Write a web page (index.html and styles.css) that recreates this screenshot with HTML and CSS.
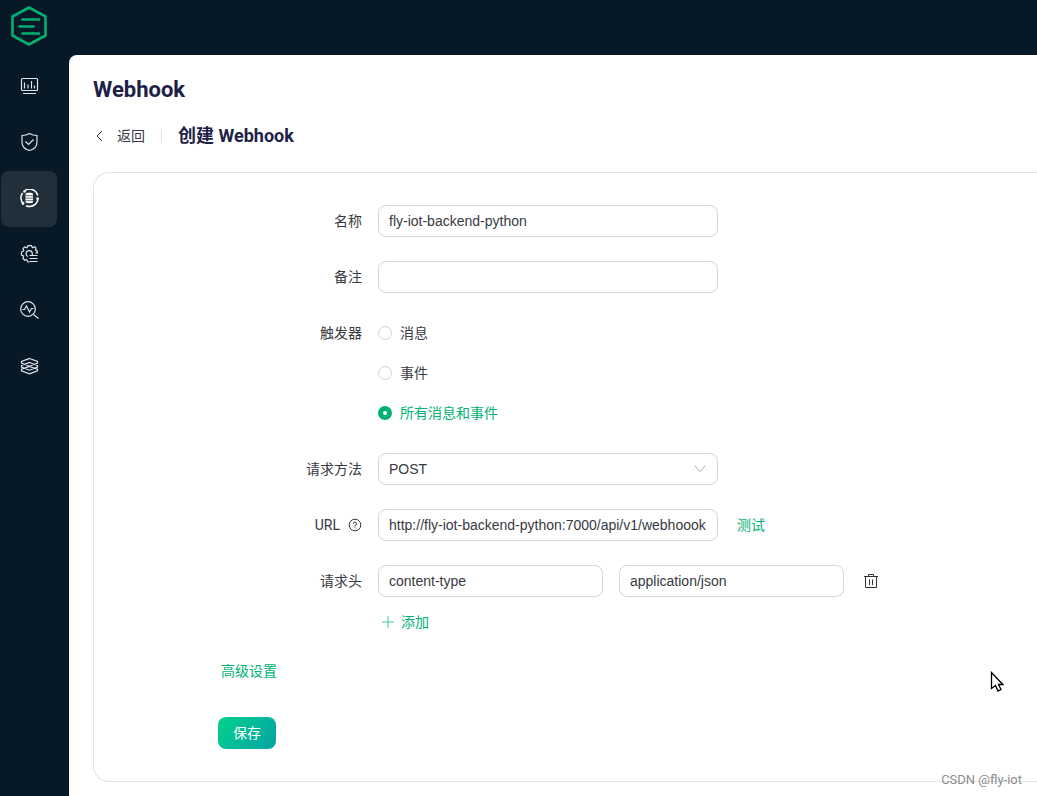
FILE: index.html
```html
<!DOCTYPE html>
<html lang="zh-CN">
<head>
<meta charset="utf-8">
<meta name="viewport" content="width=device-width, initial-scale=1">
<title>创建 Webhook</title>
<link rel="stylesheet" href="styles.css">
</head>
<body>
<div class="app">
  <aside class="sidebar">
    <a class="logo" href="#" aria-label="Home">
      <svg width="38" height="42" viewBox="0 0 38 42" fill="none" stroke="#00b173" stroke-width="2.6" stroke-linejoin="round" stroke-linecap="round">
        <path d="M19 2.500 35.500 11.500V30.500L19 39.500 2.500 30.500V11.500Z"/>
        <path d="M12.500 14.500H29M9.500 21.500H23.500M12.500 28.500H29"/>
      </svg>
    </a>
    <nav class="menu">
      <a class="menu-item" href="#" aria-label="Monitoring">
        <svg class="menu-icon" viewBox="-1 2 20 20"><rect x="1.500" y="3.500" width="16" height="12" rx="1"/><path d="M4.500 7.500V13.500M8 9.500V13.500M11.500 6V13.500M14.500 10.500V13.500M3 18.500H16"/></svg>
      </a>
      <a class="menu-item" href="#" aria-label="Access control">
        <svg class="menu-icon" viewBox="-1 2 20 20"><path d="M9.500 2.500C12 4 14.500 4.500 17 4.500V11C17 15.500 13.500 18.500 9.500 19.500C5.500 18.500 2 15.500 2 11V4.500C4.500 4.500 7 4 9.500 2.500Z"/><path d="M5.500 10.500 8.500 13.500 13.500 8.500"/></svg>
      </a>
      <a class="menu-item menu-item-active" href="#" aria-label="Integration">
        <svg class="menu-icon" viewBox="-1 2 20 20"><path d="M5 3.500A8.500 8.500 0 0 1 17.800 8.500M18 11.500A8.500 8.500 0 0 1 6 18.700M3.500 17A8.500 8.500 0 0 1 2.500 6"/><path class="solid" d="M5.500 7C5.500 5.400 13 5.400 13 7V15C13 16.600 5.500 16.600 5.500 15Z"/><path class="cut" d="M5.500 8.700H13M5.500 11.200H13M5.500 13.700H13"/><circle class="solid" cx="4.500" cy="4.500" r="1.300"/><circle class="solid" cx="3" cy="16.500" r="1.400"/><circle class="solid" cx="17.500" cy="11.500" r="1.300"/></svg>
      </a>
      <a class="menu-item" href="#" aria-label="Management">
        <svg class="menu-icon" viewBox="-1 2 20 20"><path d="M15.500 9.800H17.300V8L15.600 7.300 16 5 14.500 3.800 12.600 4.700 11.300 2.700H8L7 4.700 4.800 3.900 3 5.500 3.800 7.800 1.500 9V12L3.600 13 2.900 15.400 4.600 17.200 6.500 16.500 8 19H9.300"/><path d="M8 13.500A3.100 3.100 0 1 1 12.300 10.500V12.500M9.500 12.500H17.500M9.500 15.500H17.500M9.500 18.500H17.500"/></svg>
      </a>
      <a class="menu-item" href="#" aria-label="Diagnose">
        <svg class="menu-icon" viewBox="-1 2 20 20"><circle cx="8" cy="10" r="7.300"/><path d="M13.500 15.500 18.500 19.500M2.500 10.500H4.500L6.500 7 9.500 13 11.500 9.500H13.500"/></svg>
      </a>
      <a class="menu-item" href="#" aria-label="System">
        <svg class="menu-icon" viewBox="-1 2 20 20"><path d="M9.500 3.500 17.500 6.500V8L9.500 11.200 1.500 8V6.500ZM9.500 7.500 17.500 10.500V12L9.500 15.200 1.500 12V10.500ZM9.500 11.500 17.500 14.300V15.800L9.500 18.800 1.500 15.800V14.300Z"/></svg>
      </a>
    </nav>
  </aside>

  <main class="page">
    <h1 class="page-title">Webhook</h1>
    <div class="subhead">
      <a class="back" href="#">
        <svg width="12" height="12" viewBox="0 0 12 12" fill="none" stroke="currentColor"><path d="M9 1 4 6 9 11"/></svg>
        <span>返回</span>
      </a>
      <span class="divider"></span>
      <h2 class="subtitle">创建 Webhook</h2>
    </div>

    <form class="card">
      <div class="row">
        <label class="label" for="name">名称</label>
        <input class="input" id="name" type="text" value="fly-iot-backend-python">
      </div>
      <div class="row">
        <label class="label" for="note">备注</label>
        <input class="input" id="note" type="text">
      </div>
      <div class="row" role="radiogroup" aria-labelledby="trigger">
        <span class="label" id="trigger">触发器</span>
        <div class="radios">
          <label class="radio"><input type="radio" name="trigger"><span>消息</span></label>
          <label class="radio"><input type="radio" name="trigger"><span>事件</span></label>
          <label class="radio"><input type="radio" name="trigger" checked><span>所有消息和事件</span></label>
        </div>
      </div>
      <div class="row">
        <label class="label" for="method">请求方法</label>
        <div class="select-wrap">
          <select class="input select" id="method"><option>POST</option><option>PUT</option></select>
          <svg class="select-arrow" width="12" height="8" viewBox="0 0 12 8" fill="none" stroke="#a8abb2"><path d="M1 1 6 6.500 11 1"/></svg>
        </div>
      </div>
      <div class="row">
        <label class="label" for="url">URL
          <svg width="14" height="14" viewBox="0 0 14 14" fill="none" stroke="currentColor"><circle cx="7" cy="7" r="5.800"/><path d="M5.300 5.800A1.700 1.600 0 1 1 7 7.300V8.400M7 9.300V10.400"/></svg>
        </label>
        <input class="input" id="url" type="text" value="http://fly-iot-backend-python:7000/api/v1/webhoook">
        <button class="text-button test" type="button">测试</button>
      </div>
      <div class="row row-headers">
        <label class="label" for="header-key">请求头</label>
        <div class="header-fields">
          <input class="input input-half" id="header-key" type="text" value="content-type">
          <input class="input input-half" type="text" value="application/json" aria-label="请求头">
          <button class="icon-button" type="button" aria-label="删除">
            <svg width="16" height="16" viewBox="0 0 16 16" fill="none" stroke="#303133"><path d="M1 3.500H15M5.500 3V1.500H10.500V3M2.500 4V14.500H13.500V4M6.500 6.500V12M9.500 6.500V12"/></svg>
          </button>
        </div>
      </div>
      <button class="text-button add" type="button">
        <svg width="12" height="12" viewBox="0 0 12 12" fill="none" stroke="currentColor"><path d="M6 0V12M0 6H12"/></svg>
        <span>添加</span>
      </button>
      <button class="text-button advanced" type="button">高级设置</button>
      <button class="save" type="submit">保存</button>
    </form>
  </main>

  <svg class="cursor" width="14" height="22" viewBox="0 0 14 22" aria-hidden="true"><path d="M1.500 1.500V17.500L5.500 14.500 8 20 11 18.500 8.500 13.500H12.800Z" fill="#fff" stroke="#000" stroke-width="1.300"/></svg>
  <span class="watermark">CSDN @fly-iot</span>
</div>
</body>
</html>
```
FILE: styles.css
```css
* {
  box-sizing: border-box;
}

body {
  margin: 0;
  background: #071826;
  color: #383a42;
  font-family: Roboto, "Noto Sans CJK SC", sans-serif;
  font-size: 14px;
  line-height: 20px;
}

a {
  color: inherit;
  text-decoration: none;
}

button,
input,
select {
  margin: 0;
  font: inherit;
}

.app {
  position: relative;
  display: flex;
  min-height: 100vh;
  overflow: hidden;
}

.sidebar {
  flex: 0 0 69px;
  padding: 5px 0 0 1px;
}

.logo {
  display: block;
  height: 54px;
  padding-left: 9px;
}

.logo svg,
.menu-icon {
  display: block;
}

.menu-item {
  display: flex;
  align-items: center;
  justify-content: center;
  width: 56px;
  height: 56px;
  border-radius: 8px;
}

.menu-item-active {
  background: #212f3b;
}

.menu-icon {
  width: 20px;
  height: 20px;
  fill: none;
  stroke: #e2e5e8;
  stroke-width: 1.2;
}

.menu-item-active .menu-icon {
  stroke: #fff;
  stroke-width: 1.5;
}

.menu-icon .solid {
  fill: #fff;
  stroke: none;
}

.menu-icon .cut {
  stroke: #212f3b;
  stroke-width: 0.7;
}

.page {
  flex: 1;
  min-width: 0;
  margin-top: 55px;
  padding: 20px 0 14px 24px;
  background: #fff;
  border-top-left-radius: 8px;
}

.page-title,
.subtitle {
  margin: 0;
  color: #1d2147;
  font-weight: 700;
}

.page-title {
  font-size: 22px;
  line-height: 30px;
}

.subhead {
  display: flex;
  align-items: center;
  height: 24px;
  margin: 19px 0 24px;
}

.back {
  display: flex;
  align-items: center;
  gap: 12px;
}

.divider {
  width: 1px;
  height: 14px;
  margin: 0 16px;
  background: #dcdfe6;
}

.subtitle {
  font-size: 18px;
  line-height: 24px;
}

.card {
  display: flex;
  flex-direction: column;
  align-items: flex-start;
  padding: 32px 0 32px 124px;
  border: 1px solid #e2e3ec;
  border-right: 0;
  border-radius: 16px 0 0 16px;
}

.row {
  display: flex;
  align-items: flex-start;
  margin-bottom: 24px;
}

.label {
  display: flex;
  align-items: center;
  justify-content: flex-end;
  gap: 8px;
  width: 144px;
  height: 32px;
  margin-right: 16px;
}

.input {
  width: 340px;
  height: 32px;
  padding: 0 10px;
  border: 1px solid #d2d4de;
  border-radius: 8px;
  outline: none;
  background: #fff;
  color: #383a42;
  font-family: "Liberation Sans", "Noto Sans CJK SC", sans-serif;
}

.input-half {
  width: 225px;
}

.select-wrap {
  position: relative;
}

.select {
  display: block;
  appearance: none;
}

.select-arrow {
  position: absolute;
  top: 12px;
  right: 12px;
  pointer-events: none;
}

.radios {
  display: grid;
  gap: 8px;
}

.radio {
  display: flex;
  align-items: center;
  gap: 8px;
  height: 32px;
}

.radio input {
  width: 14px;
  height: 14px;
  border: 1px solid #d2d4de;
  border-radius: 50%;
  appearance: none;
  background: #fff;
}

.radio input:checked {
  border: 5px solid #00b173;
}

.radio input:checked + span {
  color: #00b173;
}

.text-button,
.icon-button {
  padding: 0;
  border: 0;
  background: none;
  color: #00b173;
}

.test {
  height: 32px;
  margin-left: 19px;
}

.row-headers {
  margin-bottom: 13px;
}

.header-fields {
  display: flex;
  align-items: center;
  gap: 16px;
}

.icon-button {
  display: flex;
  padding: 3px;
}

.add {
  display: flex;
  align-items: center;
  gap: 7px;
  height: 24px;
  margin: 0 0 25px 164px;
}

.add svg {
  opacity: 0.7;
}

.advanced {
  height: 24px;
  margin: 0 0 34px 3px;
}

.save {
  height: 32px;
  padding: 0 15px;
  border: 0;
  border-radius: 8px;
  background: linear-gradient(130deg, #05d28b 0%, #04a3a5 100%);
  color: #fff;
}

.cursor {
  position: absolute;
  top: 671px;
  left: 990px;
}

.watermark {
  position: absolute;
  right: 15px;
  bottom: 8px;
  color: #8c8c8c;
  font-size: 13px;
  line-height: 16px;
}
```
